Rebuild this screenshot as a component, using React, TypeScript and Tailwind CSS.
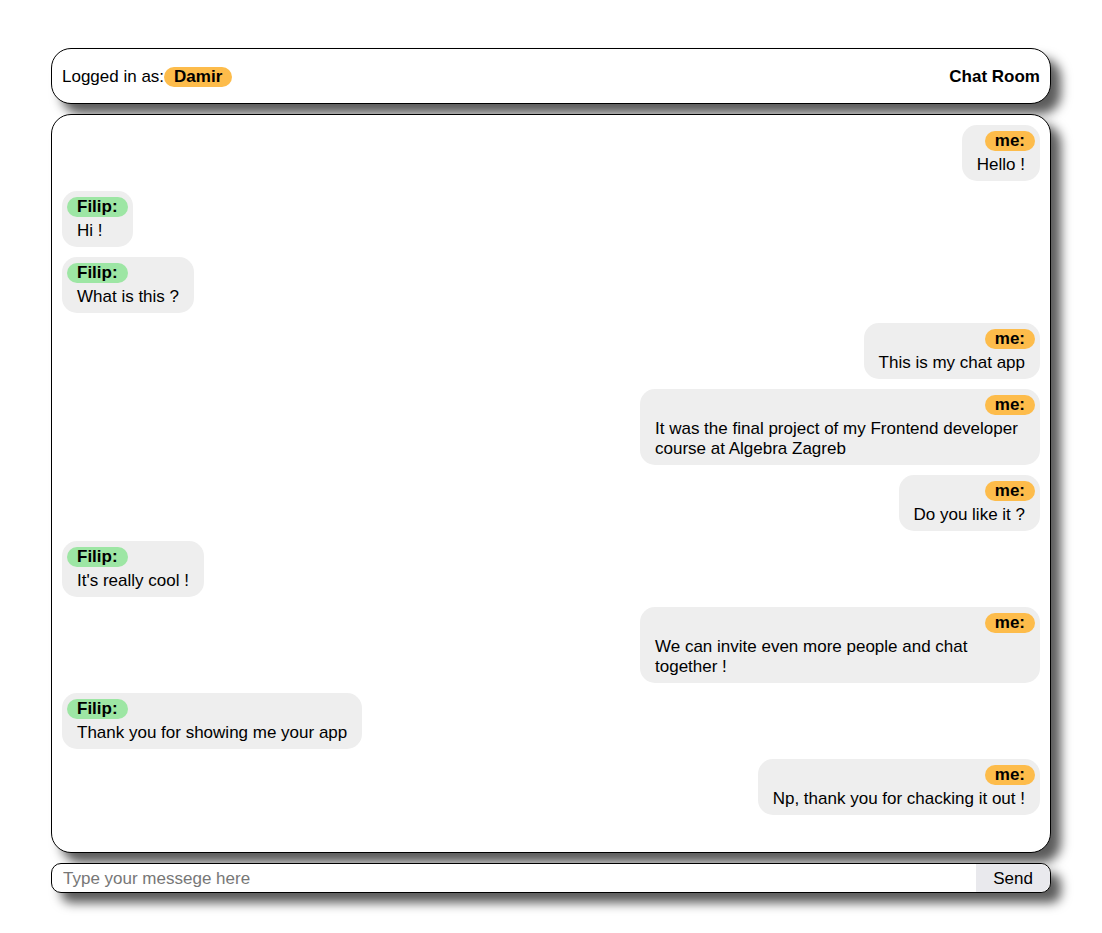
import React, { useState } from 'react'

type Message = {
  author: string
  text: string
  mine: boolean
}

const messages: Message[] = [
  { author: 'me', text: 'Hello !', mine: true },
  { author: 'Filip', text: 'Hi !', mine: false },
  { author: 'Filip', text: 'What is this ?', mine: false },
  { author: 'me', text: 'This is my chat app', mine: true },
  {
    author: 'me',
    text: 'It was the final project of my Frontend developer course at Algebra Zagreb',
    mine: true,
  },
  { author: 'me', text: 'Do you like it ?', mine: true },
  { author: 'Filip', text: "It's really cool !", mine: false },
  { author: 'me', text: 'We can invite even more people and chat together !', mine: true },
  { author: 'Filip', text: 'Thank you for showing me your app', mine: false },
  { author: 'me', text: 'Np, thank you for chacking it out !', mine: true },
]

function Bubble({ msg }: { msg: Message }) {
  return (
    <div
      className={`flex flex-col max-w-[400px] rounded-[15px] bg-[#eeeeee] px-[5px] pt-[6px] pb-[5px] ${
        msg.mine ? 'self-end items-end' : 'self-start items-start'
      }`}
    >
      <span
        className={`h-5 rounded-full px-[10px] font-bold leading-5 ${
          msg.mine ? 'bg-[#fdbc4b]' : 'bg-[#9de6a4]'
        }`}
      >
        {msg.mine ? 'me:' : msg.author + ':'}
      </span>
      <p className="self-start px-[10px] pt-[4px] pb-[1px] leading-5">{msg.text}</p>
    </div>
  )
}

export default function App() {
  const [text, setText] = useState('')

  return (
    <div className="min-h-[933px] bg-white pt-12 font-['Liberation_Sans',Arial,sans-serif] text-[17px] text-black">
      <div className="mx-auto flex w-[1000px] flex-col gap-[10px]">
        <header className="flex h-[56px] items-center justify-between rounded-[20px] border border-black bg-white px-[10px] shadow-[10px_10px_11px_#5c5c5c]">
          <div className="flex items-center pt-px">
            <span>Logged in as:</span>
            <span className="h-5 rounded-full bg-[#fdbc4b] px-[10px] font-bold leading-5">Damir</span>
          </div>
          <span className="pt-px font-bold">Chat Room</span>
        </header>

        <div className="flex h-[739px] flex-col gap-[10px] overflow-y-auto rounded-[20px] border border-black bg-white p-[10px] shadow-[10px_10px_11px_#5c5c5c]">
          {messages.map((m, i) => (
            <Bubble key={i} msg={m} />
          ))}
        </div>

        <form
          className="flex h-[30px] overflow-hidden rounded-[10px] border border-black bg-white shadow-[10px_10px_11px_#5c5c5c]"
          onSubmit={(e) => {
            e.preventDefault()
            setText('')
          }}
        >
          <input
            className="flex-1 pl-[11px] pr-[10px] pt-px outline-none placeholder:text-[#777]"
            placeholder="Type your messege here"
            value={text}
            onChange={(e) => setText(e.target.value)}
          />
          <button type="submit" className="w-[74px] rounded-r-[10px] bg-[#e9e9ed] pt-px text-center">
            Send
          </button>
        </form>
      </div>
    </div>
  )
}
